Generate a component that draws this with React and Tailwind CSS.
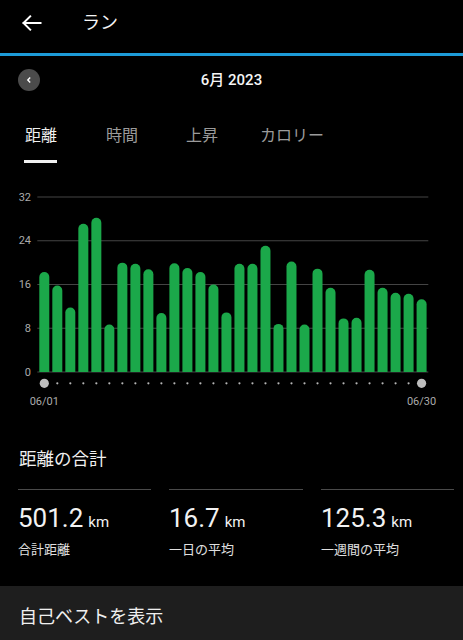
import React from "react";

const values = [18.3,15.8,11.8,27.1,28.2,8.7,20.0,19.8,18.8,10.8,19.9,19.0,18.3,16.0,10.9,19.8,19.8,23.1,8.8,20.2,8.7,18.9,15.4,9.8,9.9,18.7,15.4,14.5,14.3,13.3];

const FONT = { fontFamily: 'Roboto, "Noto Sans CJK JP", sans-serif' };

function Chart() {
  const base = 192;
  const top = 17;
  const scale = (base - top) / 32;
  const x0 = 39.3;
  const pitch = 13.01;
  const w = 10;
  const grid = [32, 24, 16, 8, 0];
  return (
    <svg width="463" height="232" viewBox="0 0 463 232" className="block">
      {grid.map((g) => {
        const y = base - g * scale;
        return (
          <g key={g}>
            <line x1="37.3" x2="428.3" y1={y} y2={y} stroke="#444444" strokeWidth="1" />
            <text x="31" y={y} textAnchor="end" dominantBaseline="central" fill="#ababab" fontSize="11" style={FONT}>
              {g}
            </text>
          </g>
        );
      })}
      {values.map((v, i) => {
        const x = x0 + i * pitch;
        const t = base - v * scale;
        const r = w / 2;
        return (
          <path
            key={i}
            d={`M${x},${base} V${t + r} A${r},${r} 0 0 1 ${x + w},${t + r} V${base} Z`}
            fill="#1ba84a"
          />
        );
      })}
      {values.map((v, i) => {
        const cx = x0 + i * pitch + w / 2;
        if (i === 0 || i === values.length - 1) {
          return <circle key={i} cx={cx} cy="203.3" r="4.6" fill="#bdbdbd" />;
        }
        return <circle key={i} cx={cx} cy="203.3" r="1.1" fill="#b5b5b5" />;
      })}
      <text x={x0 + w / 2} y="221.7" textAnchor="middle" dominantBaseline="central" fill="#ababab" fontSize="11" style={FONT}>
        06/01
      </text>
      <text x={x0 + 29 * pitch + w / 2} y="221.7" textAnchor="middle" dominantBaseline="central" fill="#ababab" fontSize="11" style={FONT}>
        06/30
      </text>
    </svg>
  );
}

function Stat({ value, label }) {
  return (
    <div className="flex flex-col">
      <div className="h-px bg-[#4a4a4a]" />
      <div className="mt-[12px] flex h-[32px] items-baseline">
        <span className="text-[26px] leading-[32px] text-[#f2f2f2]">{value}</span>
        <span className="ml-[5px] text-[15px] text-[#f2f2f2]">km</span>
      </div>
      <div className="mt-[6px] h-[20px] text-[13px] leading-[20px] text-[#e0e0e0]">{label}</div>
    </div>
  );
}

export default function App() {
  return (
    <div className="flex h-[640px] w-[463px] flex-col overflow-hidden bg-black text-white" style={FONT}>
      <div className="flex h-[53px] shrink-0 items-center pb-[8px]">
        <svg width="20" height="20" viewBox="0 0 20 20" className="ml-[22px]">
          <path d="M18.5 10 H1.5 M8.2 3.3 L1.5 10 L8.2 16.7" fill="none" stroke="#fff" strokeWidth="2" strokeLinecap="square" />
        </svg>
        <span className="ml-[40px] text-[18px] leading-[24px] text-[#f5f5f5]">ラン</span>
      </div>
      <div className="h-[3px] shrink-0 bg-[#1d9bd7]" />
      <div className="grid h-[48px] shrink-0 grid-cols-[1fr_auto_1fr] items-center">
        <div className="flex">
          <div className="ml-[18px] flex h-[22px] w-[22px] items-center justify-center rounded-full bg-[#4b4b4b]">
            <svg width="8" height="8" viewBox="0 0 8 8">
              <path d="M5.2 1.5 L2.8 4 L5.2 6.5" fill="none" stroke="#fff" strokeWidth="1.4" />
            </svg>
          </div>
        </div>
        <div className="text-[15px] font-medium leading-[20px] text-[#f5f5f5]">6月 2023</div>
        <div />
      </div>
      <div className="flex shrink-0 pt-[20px] text-[16px] leading-[24px]">
        <div className="ml-[25px] flex flex-col">
          <span className="text-[#f0f0f0]">距離</span>
          <div className="mt-[12px] ml-[-1px] h-[3px] w-[33px] bg-[#f0f0f0]" />
        </div>
        <span className="ml-[49px] text-[#9b9b9b]">時間</span>
        <span className="ml-[48px] text-[#9b9b9b]">上昇</span>
        <span className="ml-[42px] text-[#9b9b9b]">カロリー</span>
      </div>
      <div className="mt-[17px] shrink-0">
        <Chart />
      </div>
      <div className="mt-[34px] shrink-0 px-[19px] text-[17.5px] leading-[26px] text-[#f0f0f0]">距離の合計</div>
      <div className="mt-[17px] grid shrink-0 grid-cols-[133px_134px_133px] gap-x-[18px] pl-[18px]">
        <Stat value="501.2" label="合計距離" />
        <Stat value="16.7" label="一日の平均" />
        <Stat value="125.3" label="一週間の平均" />
      </div>
      <div className="mt-[26px] flex-1 bg-[#1e1e1e] px-[19px] pt-[18px] text-[18px] leading-[26px] text-[#f0f0f0]">
        自己ベストを表示
      </div>
    </div>
  );
}
